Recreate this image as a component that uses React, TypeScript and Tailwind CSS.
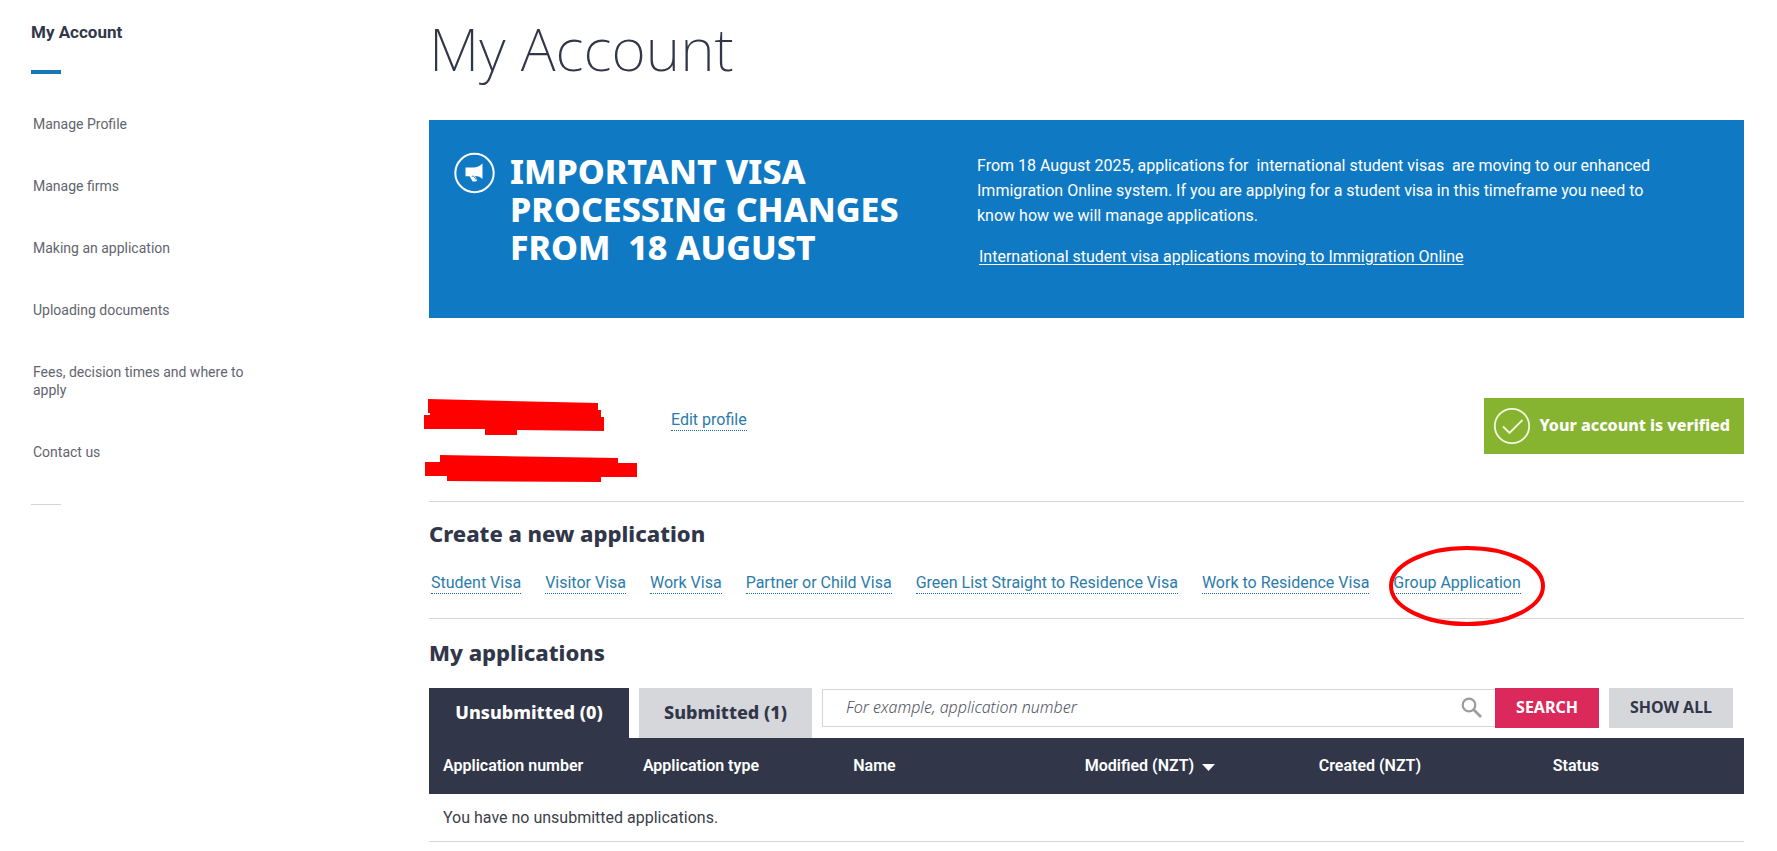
import React from "react";

const navItems = [
  "Manage Profile",
  "Manage firms",
  "Making an application",
  "Uploading documents",
  "Fees, decision times and where to apply",
  "Contact us",
];

const visaLinks = [
  "Student Visa",
  "Visitor Visa",
  "Work Visa",
  "Partner or Child Visa",
  "Green List Straight to Residence Visa",
  "Work to Residence Visa",
];

const linkClass =
  "block border-b border-dotted border-[#1c6ea4] pt-0.5 text-base leading-5 text-[#2b7bab]";

const headingFont = "font-['Noto_Sans','Open_Sans',sans-serif]";

function Sidebar() {
  return (
    <aside className="w-[429px] shrink-0 pl-[31px] pt-5">
      <h2 className="text-[17px] font-bold leading-6 text-[#313749]">My Account</h2>
      <div className="mt-[26px] h-1 w-[30px] bg-[#1776b6]" />
      <nav className="mt-[41px] pl-0.5">
        <ul className="flex w-[224px] flex-col gap-11">
          {navItems.map((item) => (
            <li key={item} className="text-sm leading-[18px]">
              <a href="#" className="block text-[#62656e]">
                {item}
              </a>
            </li>
          ))}
        </ul>
      </nav>
      <div className="mt-[43px] h-px w-[30px] bg-[#d2d4d8]" />
    </aside>
  );
}

function Banner() {
  return (
    <section className="flex min-h-[198px] bg-[#0f79c3] pb-10 pl-6 pt-8 text-white">
      <svg width="42" height="42" viewBox="0 0 42 42" className="shrink-0" aria-hidden="true">
        <circle cx="21.500" cy="21" r="19.200" fill="none" stroke="white" strokeWidth="2" />
        <path
          d="M12.500 15.500H20.500C24 15.500 26.500 14 29.500 11.500V27C27.500 25 25.500 24.300 22 24.100L24.200 28.200L22.800 29.600H19.600L16.500 24.200H12.500Z"
          fill="white"
        />
        <path d="M18.800 24.300L20.600 24.100L23.300 28" fill="none" stroke="#0f79c3" strokeWidth="0.800" />
      </svg>
      <h2 className={`${headingFont} ml-[15px] w-[412px] shrink-0 text-[34px] font-extrabold leading-[38px]`}>
        IMPORTANT VISA
        <br />
        PROCESSING CHANGES
        <br />
        FROM&nbsp; 18 AUGUST
      </h2>
      <div className="ml-[55px] mt-px w-[700px] text-base leading-[25px]">
        <p>
          From 18 August 2025, applications for&nbsp; international student visas&nbsp; are moving to our enhanced
          Immigration Online system. If you are applying for a student visa in this timeframe you need to know how we
          will manage applications.
        </p>
        <a href="#" className="mt-4 ml-0.5 inline-block underline underline-offset-2">
          International student visa applications moving to Immigration Online
        </a>
      </div>
    </section>
  );
}

function Profile() {
  return (
    <section className="flex h-[184px] items-start border-b border-[#d5d6da] pt-20">
      <svg
        width="216"
        height="86"
        viewBox="423 398 216 86"
        className="-ml-1.5 shrink-0"
        role="img"
        aria-label="Hidden name and client number"
      >
        <path
          fill="#fe0000"
          d="M428 399L598 403V410H601V417H604V431L517 430V435H485V429H424V415H430V413H428ZM440 455L618 458V463H637V477H601V482L447 481V476H425V462H440Z"
        />
      </svg>
      <div className="ml-8 mt-2.5">
        <a href="#" className={linkClass}>
          Edit profile
        </a>
      </div>
      <div className="ml-auto flex h-14 items-center bg-[#86b430] pl-[9px] pr-3.5 text-white">
        <svg width="38" height="38" viewBox="0 0 38 38" fill="none" stroke="#f3f9dc" strokeWidth="1.800" aria-hidden="true">
          <circle cx="19" cy="19" r="17.200" />
          <path d="M10 19.500l6.500 6.500L29.500 13" />
        </svg>
        <span className={`${headingFont} ml-2 pb-0.5 text-base font-extrabold`}>Your account is verified</span>
      </div>
    </section>
  );
}

function CreateApplication() {
  return (
    <section className="h-[117px] border-b border-[#d5d6da] pt-[15px]">
      <h2 className={`${headingFont} text-[22px] font-extrabold leading-8 text-[#313749]`}>Create a new application</h2>
      <div className="mt-[22px] flex items-start gap-6 whitespace-nowrap pl-0.5">
        {visaLinks.map((label) => (
          <a key={label} href="#" className={linkClass}>
            {label}
          </a>
        ))}
        <span className="relative">
          <a href="#" className={linkClass}>
            Group Application
          </a>
          <svg
            width="156"
            height="80"
            viewBox="0 0 156 80"
            className="pointer-events-none absolute -left-1 -top-[25px]"
            aria-hidden="true"
          >
            <ellipse cx="78" cy="40" rx="76" ry="38" fill="none" stroke="#fe0000" strokeWidth="4" />
          </svg>
        </span>
      </div>
    </section>
  );
}

function Applications() {
  return (
    <section className="pt-[17px]">
      <h2 className={`${headingFont} text-[22px] font-extrabold leading-8 text-[#313749]`}>My applications</h2>
      <div className={`${headingFont} mt-5 flex items-start`}>
        <button type="button" className="h-[50px] w-[200px] bg-[#313749] pb-0.5 text-lg font-extrabold text-white">
          Unsubmitted (0)
        </button>
        <button type="button" className="ml-2.5 h-[50px] w-[173px] bg-[#d6d7db] pb-0.5 text-lg font-extrabold text-[#313749]">
          Submitted (1)
        </button>
        <form className="ml-2.5 flex flex-1 pr-[11px]" onSubmit={(e) => e.preventDefault()}>
          <div className="mt-px flex h-[38px] flex-1 items-center border border-r-0 border-[#d5d6da] pr-3">
            <input
              type="text"
              aria-label="Search applications"
              placeholder="For example, application number"
              className="h-full min-w-0 flex-1 pb-0.5 pl-[23px] text-base font-light italic outline-none placeholder:text-[#50545f]"
            />
            <svg width="22" height="22" viewBox="0 0 22 22" fill="none" stroke="#9b9b9b" strokeWidth="2.200" aria-hidden="true">
              <circle cx="8" cy="8" r="6.300" />
              <path d="M12.500 12.500L20 20" strokeWidth="2.600" />
            </svg>
          </div>
          <button type="submit" className="h-10 w-[104px] bg-[#db295b] pb-0.5 text-base font-bold text-white">
            SEARCH
          </button>
          <button type="button" className="ml-2.5 h-10 w-[124px] bg-[#d6d7db] pb-0.5 text-base font-bold text-[#313749]">
            SHOW ALL
          </button>
        </form>
      </div>
      <table className="w-full table-fixed border-collapse text-left text-base">
        <thead className="bg-[#313749] text-white">
          <tr className="h-14 [&>th]:pl-3.5 [&>th]:font-semibold">
            <th className="w-[15.2%]">Application number</th>
            <th className="w-[16%]">Application type</th>
            <th className="w-[17.6%]">Name</th>
            <th className="w-[17.8%]">
              <span className="inline-flex items-center gap-2">
                Modified (NZT)
                <svg width="13" height="7" viewBox="0 0 13 7" className="mt-0.5" aria-hidden="true">
                  <path d="M0 0h13L6.500 7z" fill="white" />
                </svg>
              </span>
            </th>
            <th className="w-[17.8%]">Created (NZT)</th>
            <th>Status</th>
          </tr>
        </thead>
        <tbody>
          <tr className="h-[47px] border-b border-[#d5d6da]">
            <td colSpan={6} className="pl-3.5 pt-0.5 text-[#3b3f4b]">
              You have no unsubmitted applications.
            </td>
          </tr>
        </tbody>
      </table>
    </section>
  );
}

export default function App() {
  return (
    <div className="flex bg-white font-['Roboto','Open_Sans',sans-serif]">
      <Sidebar />
      <main className="min-w-0 flex-1 pr-[33px]">
        <h1 className={`${headingFont} pt-3 text-[59px] font-extralight leading-[72px] text-[#313749]`}>My Account</h1>
        <div className="mt-9">
          <Banner />
        </div>
        <Profile />
        <CreateApplication />
        <Applications />
      </main>
    </div>
  );
}
